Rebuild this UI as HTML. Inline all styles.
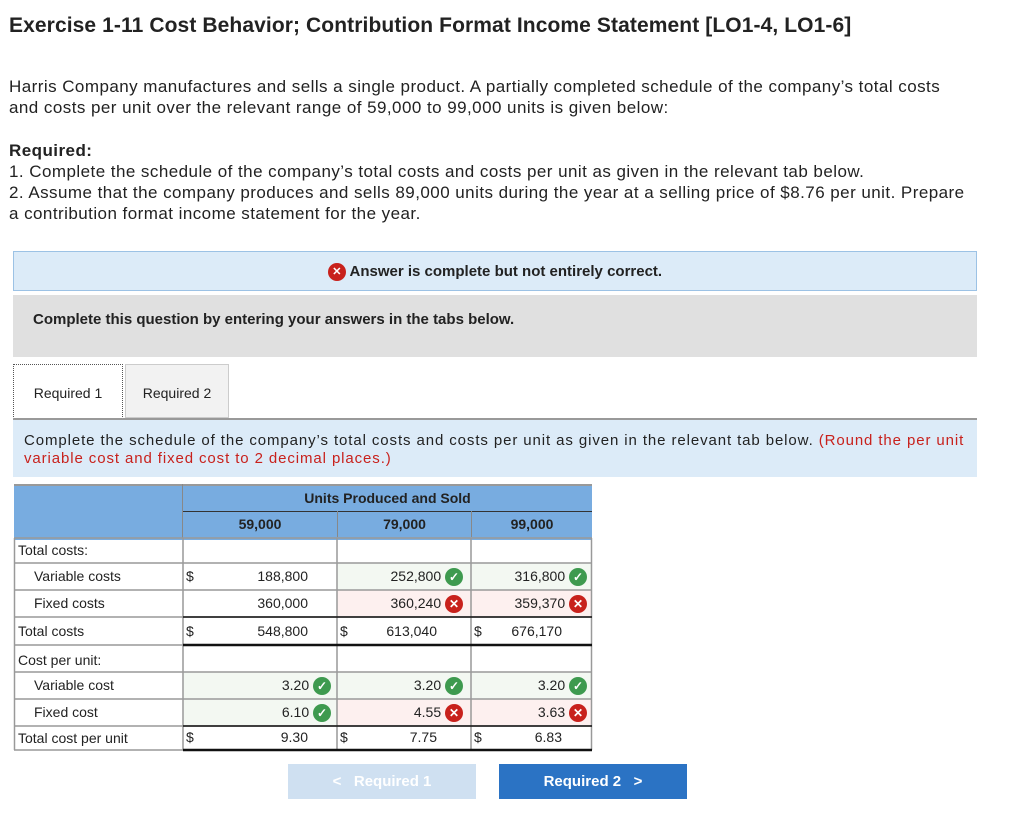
<!DOCTYPE html>
<html><head><meta charset="utf-8"><style>
body{margin:0;width:1024px;height:829px;background:#fff;font-family:"Liberation Sans",sans-serif;color:#222;position:relative;overflow:hidden}
.a{position:absolute}
h1{position:absolute;left:9px;top:14px;margin:0;font-size:21px;font-weight:bold;color:#222;letter-spacing:0.1px}
p{margin:0}
.t{font-size:17px;line-height:21px;white-space:nowrap;letter-spacing:0.45px}
.c{position:absolute;box-sizing:border-box;font-size:14px;line-height:26px}
.ok,.no{display:inline-block;width:18px;height:18px;border-radius:50%;vertical-align:middle;text-align:center;color:#fff;font-size:12px;line-height:18px;font-weight:bold}
.ok{background:#3e9a4f}.no{background:#c8211c}
</style></head><body>
<h1>Exercise 1-11 Cost Behavior; Contribution Format Income Statement [LO1-4, LO1-6]</h1>
<div class="a t" style="left:9px;top:76px">Harris Company manufactures and sells a single product. A partially completed schedule of the company’s total costs<br>and costs per unit over the relevant range of 59,000 to 99,000 units is given below:</div>
<div class="a t" style="left:9px;top:140px"><b>Required:</b><br>1. Complete the schedule of the company’s total costs and costs per unit as given in the relevant tab below.<br>2. Assume that the company produces and sells 89,000 units during the year at a selling price of $8.76 per unit. Prepare<br>a contribution format income statement for the year.</div>
<div class="a" style="left:13px;top:251px;width:964px;height:40px;background:#dcebf8;border:1px solid #9cc2e5;box-sizing:border-box;text-align:center;font-size:15px;font-weight:bold;line-height:39px"><span class="no" style="font-size:11px">✕</span> Answer is complete but not entirely correct.</div>
<div class="a" style="left:13px;top:295px;width:964px;height:62px;background:#e0e0e0;font-size:15px;font-weight:bold;line-height:50px;padding-left:20px;box-sizing:border-box">Complete this question by entering your answers in the tabs below.</div>
<div class="a" style="left:13px;top:364px;width:110px;height:55px;border:1px dotted #555;border-bottom:none;background:#fff;box-sizing:border-box;font-size:14px;line-height:56px;text-align:center">Required 1</div>
<div class="a" style="left:125px;top:364px;width:104px;height:54px;border:1px solid #ccc;background:#f2f2f2;box-sizing:border-box;font-size:14px;line-height:56px;text-align:center">Required 2</div>
<div class="a" style="left:13px;top:418px;width:964px;height:59px;background:#dcebf8;border-top:2px solid #999;box-sizing:border-box;font-size:15px;line-height:18px;padding:12px 10px 0 11px;white-space:nowrap;letter-spacing:0.9px">Complete the schedule of the company’s total costs and costs per unit as given in the relevant tab below. <span style="color:#c8211c">(Round the per unit<br>variable cost and fixed cost to 2 decimal places.)</span></div>
<div class="a" style="left:14px;top:484px;width:578px;height:54px;background:#78ace0;border-top:2px solid #999"></div>
<div class="a" style="left:182px;top:484px;width:1px;height:54px;background:#888"></div>
<div class="c" style="left:183px;top:485px;width:409px;text-align:center;font-weight:bold">Units Produced and Sold</div>
<div class="a" style="left:183px;top:511px;width:409px;height:1px;background:#333"></div>
<div class="c" style="left:183px;top:511px;width:154px;text-align:center;font-weight:bold">59,000</div>
<div class="c" style="left:337px;top:511px;width:134px;text-align:center;font-weight:bold;border-left:1px solid #888">79,000</div>
<div class="c" style="left:471px;top:511px;width:121px;text-align:center;font-weight:bold;border-left:1px solid #888">99,000</div>
<svg class="a" style="left:0;top:0" width="1024" height="829">
<g fill="#f3f8f2"><rect x="337" y="563" width="134" height="27"/><rect x="471" y="563" width="121" height="27"/><rect x="183" y="672" width="154" height="54"/><rect x="337" y="672" width="134" height="27"/><rect x="471" y="672" width="121" height="27"/></g>
<g fill="#fdf0ef"><rect x="337" y="590" width="134" height="27"/><rect x="471" y="590" width="121" height="27"/><rect x="337" y="699" width="134" height="27"/><rect x="471" y="699" width="121" height="27"/></g>
<g stroke="#999" stroke-width="1.5"><line x1="14" y1="538" x2="592" y2="538"/><line x1="14" y1="563" x2="592" y2="563"/><line x1="14" y1="590" x2="592" y2="590"/><line x1="14" y1="617" x2="592" y2="617"/><line x1="14" y1="672" x2="592" y2="672"/><line x1="14" y1="699" x2="592" y2="699"/><line x1="14" y1="726" x2="592" y2="726"/><line x1="14" y1="645" x2="183" y2="645"/><line x1="14" y1="750" x2="183" y2="750"/>
<line x1="14.5" y1="538" x2="14.5" y2="750"/><line x1="183" y1="538" x2="183" y2="750"/><line x1="337" y1="538" x2="337" y2="750"/><line x1="471" y1="538" x2="471" y2="750"/><line x1="591.5" y1="538" x2="591.5" y2="750"/></g>
<g stroke="#111" stroke-width="2.5"><line x1="183" y1="645" x2="592" y2="645"/><line x1="183" y1="750" x2="592" y2="750"/></g>
<g stroke="#111" stroke-width="1.5"><line x1="183" y1="617" x2="592" y2="617"/><line x1="183" y1="726" x2="592" y2="726"/></g>
</svg>
<div class="c" style="left:18px;top:537px">Total costs:</div>
<div class="c" style="left:34px;top:563px">Variable costs</div>
<div class="c" style="left:34px;top:590px">Fixed costs</div>
<div class="c" style="left:18px;top:618px">Total costs</div>
<div class="c" style="left:18px;top:647px">Cost per unit:</div>
<div class="c" style="left:34px;top:672px">Variable cost</div>
<div class="c" style="left:34px;top:699px">Fixed cost</div>
<div class="c" style="left:18px;top:725px">Total cost per unit</div>
<div class="c" style="left:186px;top:563px">$</div><div class="c" style="left:186px;top:618px">$</div><div class="c" style="left:340px;top:618px">$</div><div class="c" style="left:474px;top:618px">$</div>
<div class="c" style="left:186px;top:724px">$</div><div class="c" style="left:340px;top:724px">$</div><div class="c" style="left:474px;top:724px">$</div>
<div class="c" style="left:183px;top:563px;width:125px;text-align:right">188,800</div>
<div class="c" style="left:183px;top:590px;width:125px;text-align:right">360,000</div>
<div class="c" style="left:183px;top:618px;width:125px;text-align:right">548,800</div>
<div class="c" style="left:337px;top:563px;width:126px;text-align:right">252,800 <span class="ok">✓</span></div>
<div class="c" style="left:337px;top:590px;width:126px;text-align:right">360,240 <span class="no">✕</span></div>
<div class="c" style="left:337px;top:618px;width:100px;text-align:right">613,040</div>
<div class="c" style="left:471px;top:563px;width:116px;text-align:right">316,800 <span class="ok">✓</span></div>
<div class="c" style="left:471px;top:590px;width:116px;text-align:right">359,370 <span class="no">✕</span></div>
<div class="c" style="left:471px;top:618px;width:91px;text-align:right">676,170</div>
<div class="c" style="left:183px;top:672px;width:148px;text-align:right">3.20 <span class="ok">✓</span></div>
<div class="c" style="left:183px;top:699px;width:148px;text-align:right">6.10 <span class="ok">✓</span></div>
<div class="c" style="left:183px;top:724px;width:125px;text-align:right">9.30</div>
<div class="c" style="left:337px;top:672px;width:126px;text-align:right">3.20 <span class="ok">✓</span></div>
<div class="c" style="left:337px;top:699px;width:126px;text-align:right">4.55 <span class="no">✕</span></div>
<div class="c" style="left:337px;top:724px;width:100px;text-align:right">7.75</div>
<div class="c" style="left:471px;top:672px;width:116px;text-align:right">3.20 <span class="ok">✓</span></div>
<div class="c" style="left:471px;top:699px;width:116px;text-align:right">3.63 <span class="no">✕</span></div>
<div class="c" style="left:471px;top:724px;width:91px;text-align:right">6.83</div>
<div class="a" style="left:288px;top:764px;width:188px;height:35px;background:#cfe0f1;color:#fff;font-size:15px;font-weight:bold;line-height:35px;text-align:center">&lt;&nbsp;&nbsp; Required 1</div>
<div class="a" style="left:499px;top:764px;width:188px;height:35px;background:#2b73c4;color:#fff;font-size:15px;font-weight:bold;line-height:35px;text-align:center">Required 2 &nbsp;&nbsp;&gt;</div>
</body></html>
